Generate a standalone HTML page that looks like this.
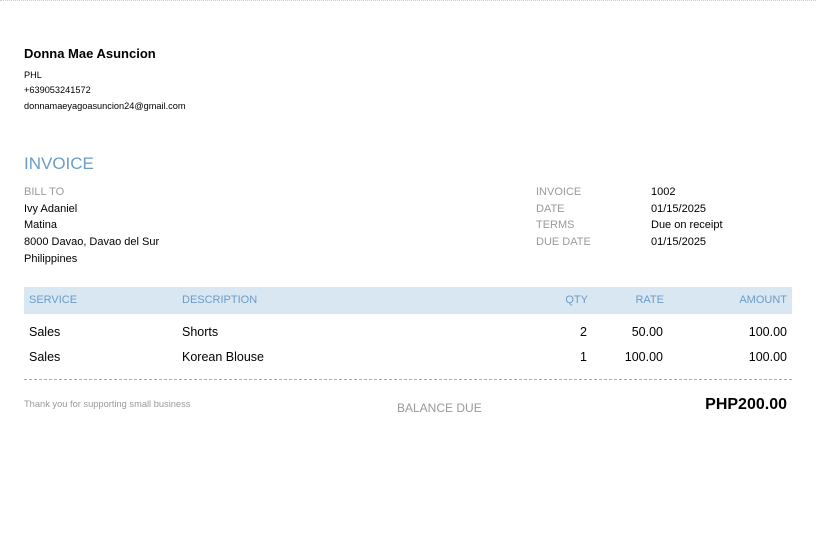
<!DOCTYPE html>
<html><head><meta charset="utf-8"><style>
body{margin:0;width:816px;height:543px;background:#fff;font-family:"Liberation Sans",sans-serif;position:relative;overflow:hidden}
div{position:absolute;white-space:nowrap}
.g{color:#9a9a9a;font-size:11px}
.b{color:#000;font-size:11px}
.h{color:#6a9cc9;font-size:11px;top:294px}
.r{font-size:12.5px;color:#000}
</style></head><body>
<div style="left:0;top:0;width:816px;border-top:1px dotted #ccc"></div>
<div style="left:24px;top:46px;font-size:13px;font-weight:bold">Donna Mae Asuncion</div>
<div style="left:24px;top:70px;font-size:9.2px">PHL</div>
<div style="left:24px;top:85px;font-size:9.2px">+639053241572</div>
<div style="left:24px;top:101px;font-size:9.2px">donnamaeyagoasuncion24@gmail.com</div>
<div style="left:24px;top:154px;font-size:17px;color:#6a9cc9">INVOICE</div>
<div class="g" style="left:24px;top:186px">BILL TO</div>
<div class="b" style="left:24px;top:203px">Ivy Adaniel</div>
<div class="b" style="left:24px;top:219px">Matina</div>
<div class="b" style="left:24px;top:236px">8000 Davao, Davao del Sur</div>
<div class="b" style="left:24px;top:253px">Philippines</div>
<div class="g" style="left:536px;top:186px">INVOICE</div>
<div class="g" style="left:536px;top:203px">DATE</div>
<div class="g" style="left:536px;top:219px">TERMS</div>
<div class="g" style="left:536px;top:236px">DUE DATE</div>
<div class="b" style="left:651px;top:186px">1002</div>
<div class="b" style="left:651px;top:203px">01/15/2025</div>
<div class="b" style="left:651px;top:219px">Due on receipt</div>
<div class="b" style="left:651px;top:236px">01/15/2025</div>
<div style="left:24px;top:287px;width:768px;height:27px;background:#d8e7f1"></div>
<div class="h" style="left:29px">SERVICE</div>
<div class="h" style="left:182px">DESCRIPTION</div>
<div class="h" style="right:228px">QTY</div>
<div class="h" style="right:152px">RATE</div>
<div class="h" style="right:29px">AMOUNT</div>
<div class="r" style="left:29px;top:325px">Sales</div>
<div class="r" style="left:182px;top:325px">Shorts</div>
<div class="r" style="right:229px;top:325px">2</div>
<div class="r" style="right:153px;top:325px">50.00</div>
<div class="r" style="right:29px;top:325px">100.00</div>
<div class="r" style="left:29px;top:350px">Sales</div>
<div class="r" style="left:182px;top:350px">Korean Blouse</div>
<div class="r" style="right:229px;top:350px">1</div>
<div class="r" style="right:153px;top:350px">100.00</div>
<div class="r" style="right:29px;top:350px">100.00</div>
<div style="left:24px;top:379px;width:768px;border-top:1px dashed #aaa"></div>
<div style="left:24px;top:399px;font-size:9.3px;color:#999">Thank you for supporting small business</div>
<div style="left:397px;top:401px;font-size:12px;color:#999">BALANCE DUE</div>
<div style="right:29px;top:396px;font-size:16px;font-weight:bold">PHP200.00</div>
</body></html>
